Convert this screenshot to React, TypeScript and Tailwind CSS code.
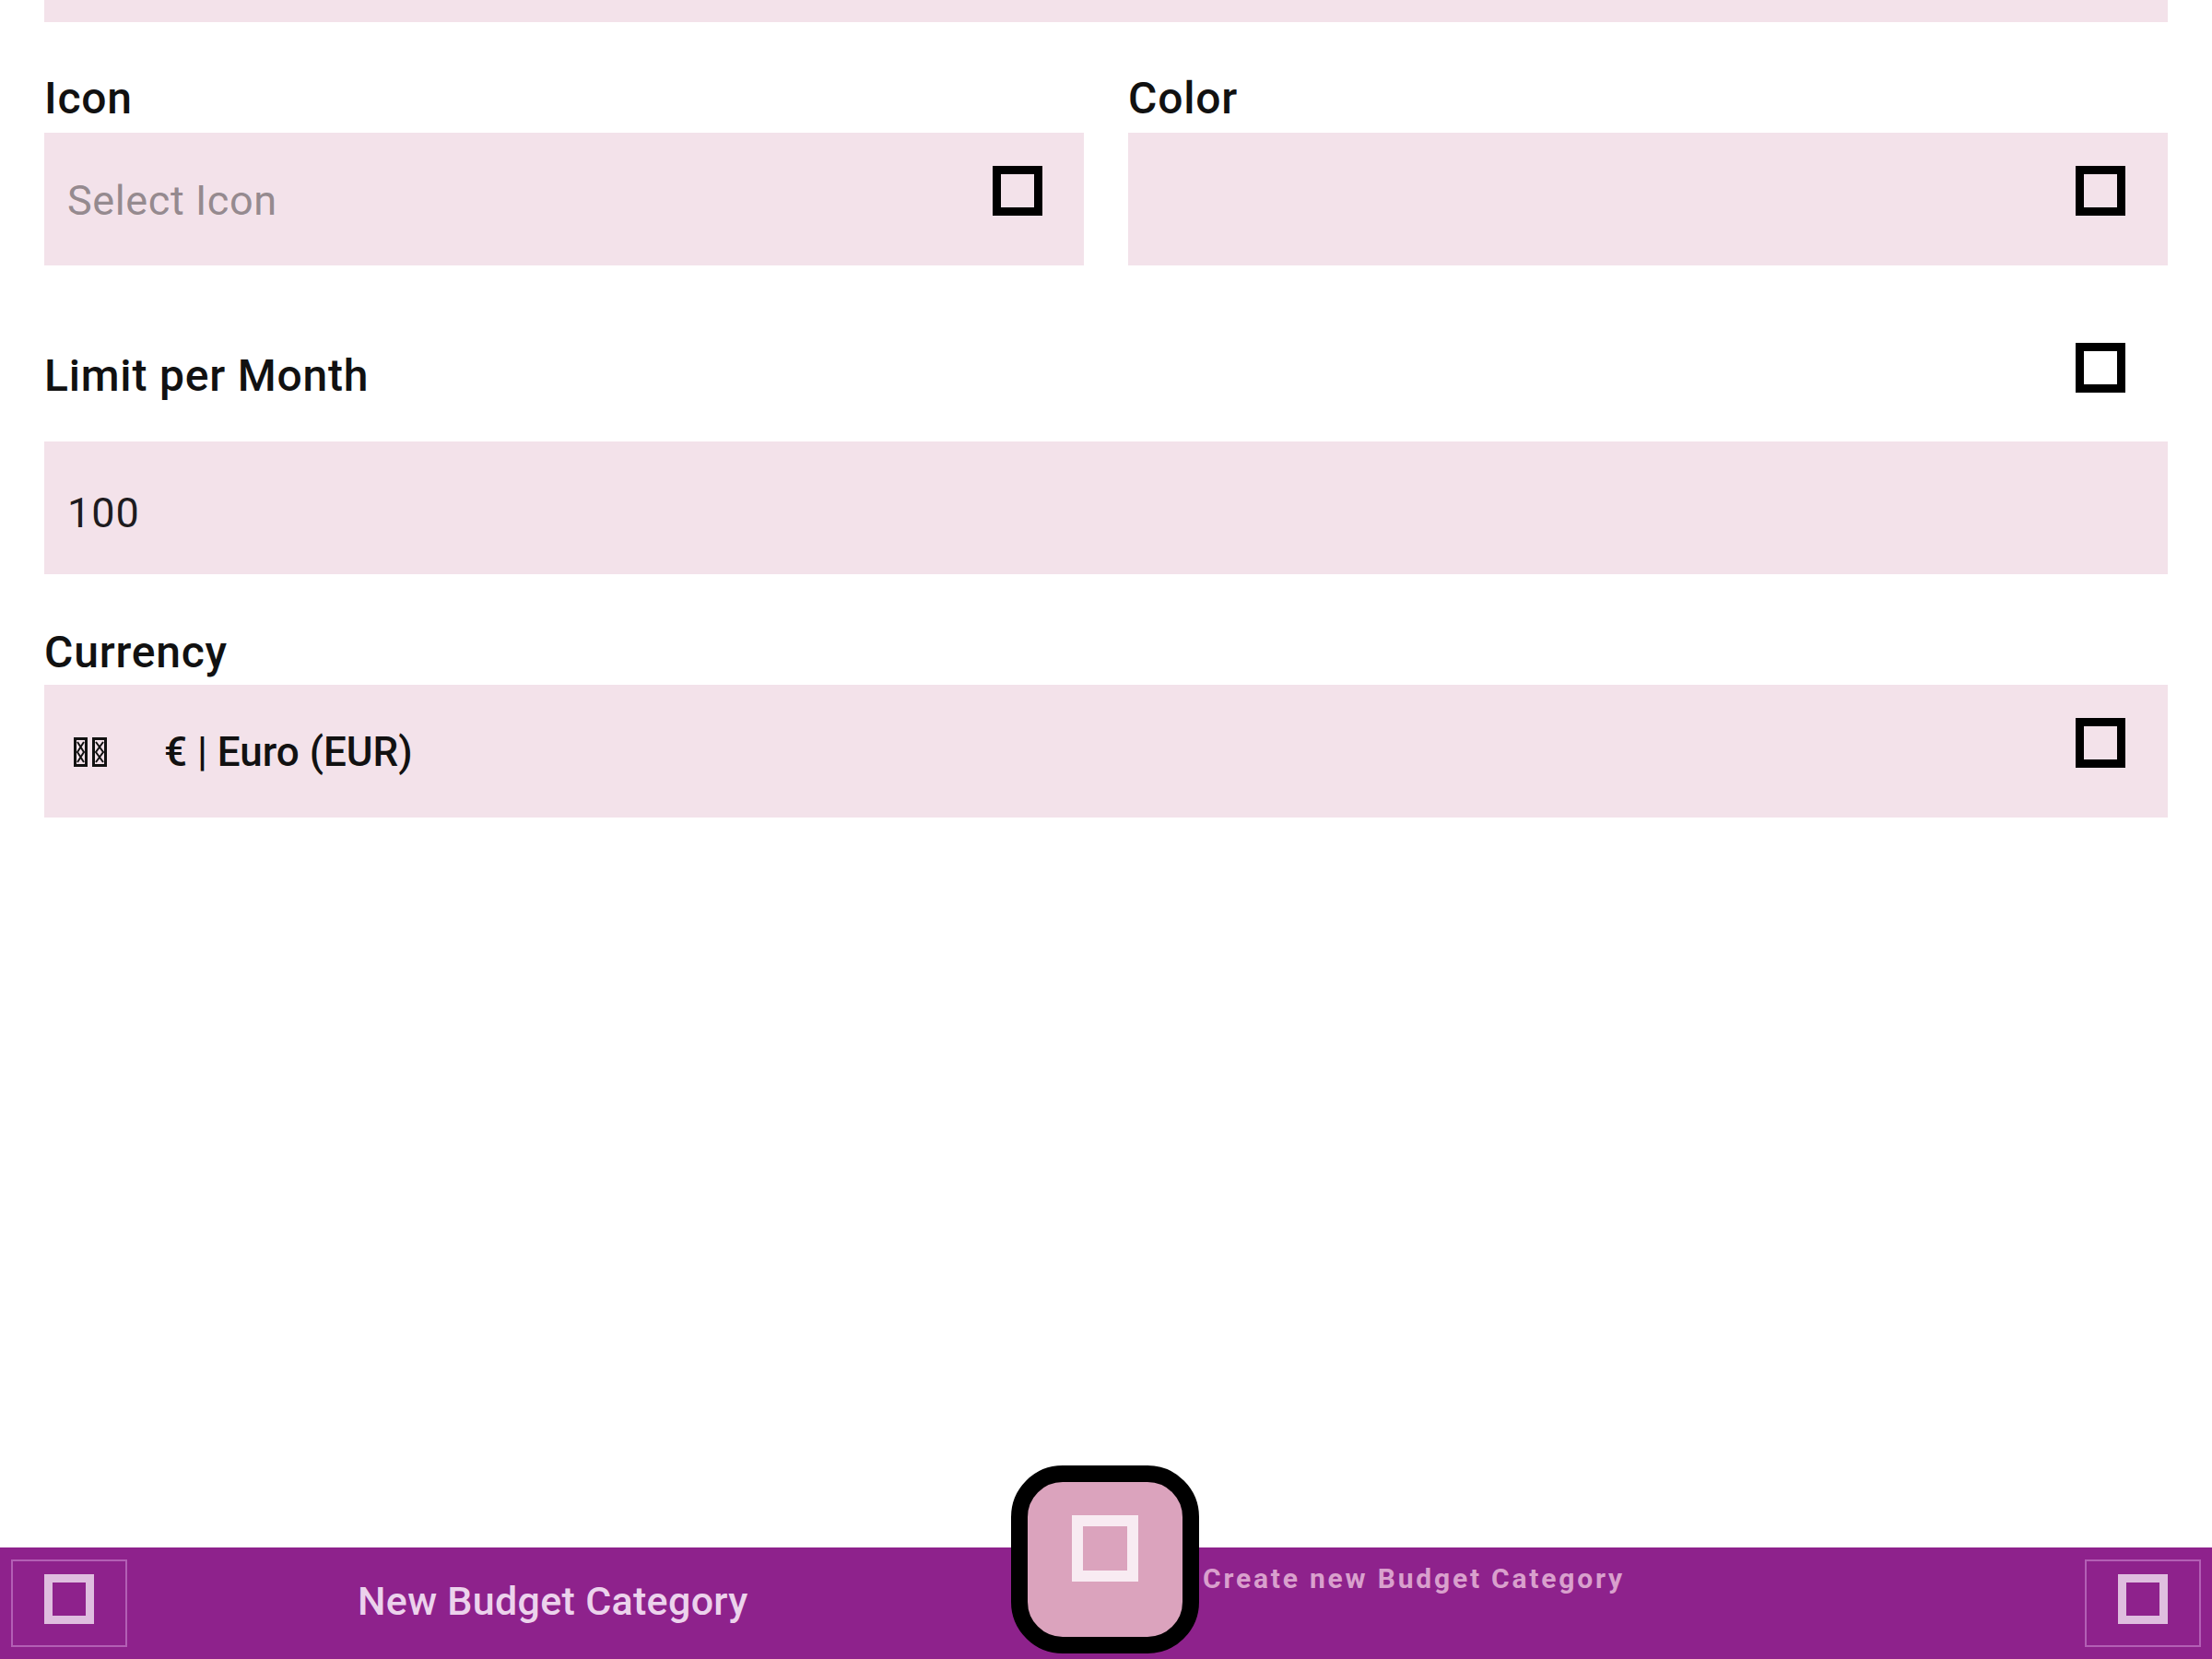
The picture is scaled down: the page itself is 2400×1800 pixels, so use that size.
import type { ReactNode } from "react";

type TofuProps = {
  className: string;
};

// missing-glyph box, as the icon font failed to load in the original
function Tofu({ className }: TofuProps) {
  return <div className={`shrink-0 ${className}`} />;
}

function FlagTofu() {
  return (
    <svg width="36" height="32" viewBox="0 0 36 32" className="shrink-0">
      <rect x="1.5" y="1.5" width="12" height="29" fill="none" stroke="#111" strokeWidth="3" />
      <path d="M4 5 L11 16 L4 27 M11 5 L4 16 L11 27" fill="none" stroke="#111" strokeWidth="2" />
      <rect x="21.5" y="1.5" width="13" height="29" fill="none" stroke="#111" strokeWidth="3" />
      <path d="M24 5 L32 16 L24 27 M32 5 L24 16 L32 27" fill="none" stroke="#111" strokeWidth="2" />
    </svg>
  );
}

function Label({ children }: { children: ReactNode }) {
  return (
    <span className="block text-[48px] leading-[56px] font-medium tracking-[0.8px] text-[#111]">
      {children}
    </span>
  );
}

export default function App() {
  return (
    <div className="h-[1800px] w-full bg-white flex flex-col overflow-hidden font-['Roboto',sans-serif]">
      <div className="px-12 flex flex-col">
        <div className="h-[24px] bg-[#f3e2ea]" />

        <div className="mt-[55px] grid grid-cols-2 gap-12">
          <div className="flex flex-col">
            <Label>Icon</Label>
            <div className="mt-[9px] h-[144px] bg-[#f3e2ea] flex items-center justify-between pl-[25px] pr-[45px]">
              <span className="pt-[3px] text-[45px] leading-[53px] tracking-[0.6px] text-[#958a8f]">
                Select Icon
              </span>
              <Tofu className="mb-[18px] w-[54px] h-[54px] border-[9px] border-black" />
            </div>
          </div>
          <div className="flex flex-col">
            <Label>Color</Label>
            <div className="mt-[9px] h-[144px] bg-[#f3e2ea] flex items-center justify-end pr-[46px]">
              <Tofu className="mb-[18px] w-[54px] h-[54px] border-[9px] border-black" />
            </div>
          </div>
        </div>

        <div className="mt-[84px] flex justify-between items-start">
          <span className="pt-[8px] text-[48px] leading-[56px] font-medium tracking-[0.8px] text-[#111]">
            Limit per Month
          </span>
          <Tofu className="mr-[46px] w-[54px] h-[54px] border-[9px] border-black" />
        </div>

        <div className="mt-[43px] h-[144px] bg-[#f3e2ea] flex items-center pl-[25px]">
          <span className="pt-[11px] text-[45px] leading-[53px] tracking-[1px] text-[#1d1b1e]">
            100
          </span>
        </div>

        <div className="mt-[57px]">
          <Label>Currency</Label>
        </div>
        <div className="mt-[7px] h-[144px] bg-[#f3e2ea] flex items-center pl-[32px] pr-[46px]">
          <div className="pt-[2px] flex items-center">
            <FlagTofu />
          </div>
          <span className="ml-[62px] pt-[2px] text-[44px] leading-[52px] font-medium text-[#111]">
            € | Euro (EUR)
          </span>
          <Tofu className="ml-auto mb-[18px] w-[54px] h-[54px] border-[9px] border-black" />
        </div>
      </div>

      <div className="mt-auto relative h-[121px] bg-[#8e228c] flex items-center">
        <button className="ml-[12px] w-[126px] h-[95px] border-2 border-[#b35fb5] flex items-center justify-center">
          <Tofu className="mb-[10px] w-[54px] h-[54px] border-[9px] border-[#dfbedf]" />
        </button>

        <span className="ml-[250px] pb-[6px] text-[43px] leading-[50px] font-medium tracking-[0.3px] text-[#ecd2ec]">
          New Budget Category
        </span>

        <button className="ml-auto mr-[12px] w-[126px] h-[95px] border-2 border-[#b35fb5] flex items-center justify-center">
          <Tofu className="mb-[10px] w-[54px] h-[54px] border-[9px] border-[#dfbedf]" />
        </button>

        <div className="absolute left-[1097px] top-[-89px] w-[204px] h-[204px] rounded-[56px] border-[18px] border-black bg-[#dba3bd] flex items-center justify-center">
          <Tofu className="mb-[24px] w-[72px] h-[72px] border-[12px] border-[#f8ebf2]" />
        </div>

        <span className="absolute left-[1305px] top-[16px] text-[30px] leading-[36px] font-bold tracking-[2.8px] text-[#d9a0cd]">
          Create new Budget Category
        </span>
      </div>
    </div>
  );
}
